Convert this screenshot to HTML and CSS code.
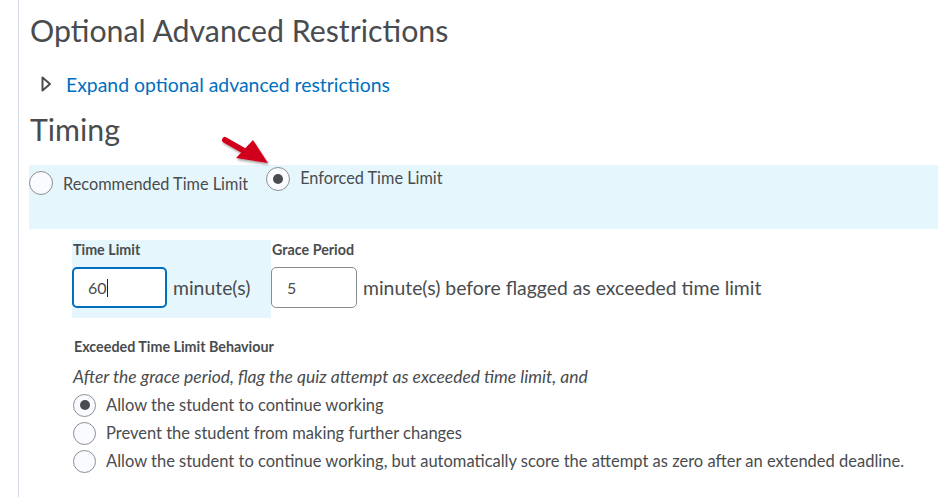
FILE: index.html
```html
<!DOCTYPE html>
<html>
<head>
<meta charset="utf-8">
<link rel="stylesheet" href="styles.css">
</head>
<body>
<div class="page">
  <h1 class="heading">Optional Advanced Restrictions</h1>
  <div class="expand">
    <svg class="caret" width="11" height="16" viewBox="0 0 11 16"><path d="M1.5 1.5 L9 8 L1.5 14.5 Z" fill="none" stroke="#494c4e" stroke-width="2" stroke-linejoin="round"/></svg>
    <a class="expand-link" href="#">Expand optional advanced restrictions</a>
  </div>
  <h2 class="heading timing">Timing</h2>
  <div class="band">
    <label class="opt opt-rec"><span class="radio"></span><span>Recommended Time Limit</span></label>
    <label class="opt opt-enf"><span class="radio checked"></span><span class="enf-text">Enforced Time Limit</span></label>
    <svg class="arrow" width="60" height="40" viewBox="0 0 60 40">
      <defs><filter id="sh" x="-20%" y="-20%" width="140%" height="140%"><feDropShadow dx="1" dy="2" stdDeviation="1.2" flood-color="#000" flood-opacity="0.35"/></filter></defs>
      <g filter="url(#sh)">
        <path d="M6 10 L27 22" stroke="#d0021b" stroke-width="6" stroke-linecap="round"/>
        <path d="M17 28 L49 33 L34 10 Z" fill="#d0021b"/>
      </g>
    </svg>
  </div>
  <div class="fields">
    <div class="field field-active">
      <div class="flabel">Time Limit</div>
      <div class="frow"><div class="input input-focus">60<span class="caretline"></span></div><span class="unit">minute(s)</span></div>
    </div>
    <div class="field">
      <div class="flabel">Grace Period</div>
      <div class="frow"><div class="input">5</div><span class="unit">minute(s) before flagged as exceeded time limit</span></div>
    </div>
  </div>
  <div class="behaviour">
    <div class="flabel">Exceeded Time Limit Behaviour</div>
    <div class="hint">After the grace period, flag the quiz attempt as exceeded time limit, and</div>
    <div class="ropts">
      <label class="ropt"><span class="radio small checked"></span><span>Allow the student to continue working</span></label>
      <label class="ropt"><span class="radio small"></span><span>Prevent the student from making further changes</span></label>
      <label class="ropt"><span class="radio small"></span><span>Allow the student to continue working, but automatically score the attempt as zero after an extended deadline.</span></label>
    </div>
  </div>
</div>
</body>
</html>
```
FILE: styles.css
```css
html, body {
  margin: 0;
  padding: 0;
  background: #ffffff;
}
body {
  font-family: Lato, "Open Sans", sans-serif;
  color: #494c4e;
  width: 938px;
  height: 497px;
  overflow: hidden;
}
.page {
  margin-left: 18px;
  border-left: 1px solid #d3d9e3;
  min-height: 497px;
  padding-left: 10px;
  box-sizing: border-box;
}
.heading {
  font-weight: 400;
  font-size: 30.3px;
  line-height: 36px;
  margin: 0;
  padding-left: 1px;
  color: #494c4e;
}
.page > .heading:first-child {
  padding-top: 12px;
}
.expand {
  display: flex;
  align-items: center;
  margin-top: 24px;
  height: 24px;
}
.caret {
  margin-left: 12px;
  margin-right: 14px;
}
.expand-link {
  color: #006fbf;
  text-decoration: none;
  font-size: 19.4px;
}
.timing {
  margin-top: 15px;
}
.band {
  position: relative;
  background: #e6f6fd;
  height: 64px;
  margin-top: 18px;
  display: flex;
  align-items: flex-start;
}
.opt {
  display: flex;
  align-items: center;
  font-size: 16.3px;
  color: #494c4e;
}
.opt .radio {
  margin-right: 10px;
}
.opt-rec {
  margin-top: 6px;
}
.opt-enf {
  margin-left: 18px;
  margin-top: 2px;
}
.enf-text {
  margin-top: -3px;
}
.radio {
  box-sizing: border-box;
  width: 24px;
  height: 24px;
  border: 1px solid #8a8f93;
  border-radius: 50%;
  background: #f9fbff;
  position: relative;
  flex: none;
}
.radio.checked::after {
  content: "";
  position: absolute;
  left: 6px;
  top: 6px;
  width: 10px;
  height: 10px;
  border-radius: 50%;
  background: #494c4e;
}
.arrow {
  position: absolute;
  left: 190px;
  top: -35px;
}
.fields {
  display: flex;
  margin-top: 11px;
  margin-left: 43px;
}
.field {
  height: 78px;
}
.field-active {
  background: #e6f6fd;
  width: 199px;
}
.flabel {
  font-size: 14.3px;
  font-weight: 700;
  color: #494c4e;
  padding-left: 1px;
  line-height: 16px;
}
.field .flabel {
  padding-top: 2px;
}
.frow {
  display: flex;
  align-items: center;
  margin-top: 9px;
}
.input {
  box-sizing: border-box;
  width: 86px;
  height: 41px;
  border: 1px solid #868c8f;
  border-radius: 5px;
  background: #fff;
  font-size: 16px;
  padding-left: 15px;
  line-height: 39px;
  color: #494c4e;
}
.input-focus {
  width: 95px;
  border: 2px solid #006fbf;
  line-height: 37px;
  padding-left: 14px;
}
.caretline {
  display: inline-block;
  width: 1px;
  height: 18px;
  background: #202020;
  vertical-align: -3px;
}
.unit {
  font-size: 19.4px;
  margin-left: 6px;
  color: #494c4e;
}
.behaviour {
  margin-left: 44px;
  margin-top: 21px;
}
.hint {
  font-style: italic;
  font-size: 17.5px;
  margin-top: 11px;
  line-height: 22px;
}
.ropts {
  margin-top: 3px;
}
.ropt {
  display: flex;
  align-items: center;
  font-size: 16.5px;
  height: 28px;
}
.radio.small {
  width: 23px;
  height: 23px;
  margin-right: 10px;
}
.radio.small.checked::after {
  left: 5.5px;
  top: 5.5px;
}
```
